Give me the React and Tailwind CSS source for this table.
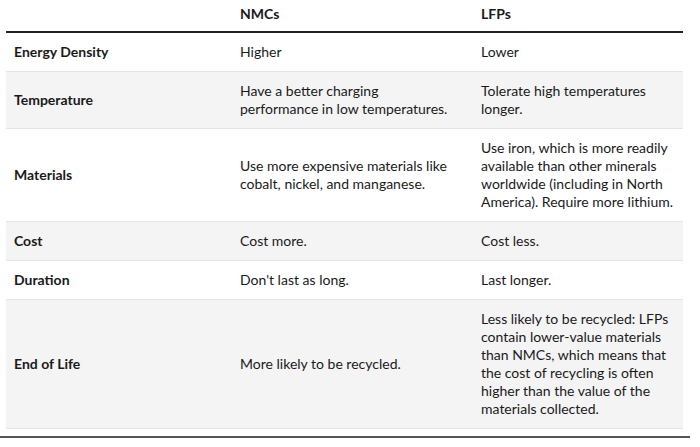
import React from 'react';

const rows = [
    { label: 'Energy Density', nmc: 'Higher', lfp: 'Lower' },
    {
        label: 'Temperature',
        nmc: 'Have a better charging performance in low temperatures.',
        lfp: 'Tolerate high temperatures longer.',
    },
    {
        label: 'Materials',
        nmc: 'Use more expensive materials like cobalt, nickel, and manganese.',
        lfp: 'Use iron, which is more readily available than other minerals worldwide (including in North America). Require more lithium.',
    },
    { label: 'Cost', nmc: 'Cost more.', lfp: 'Cost less.' },
    { label: 'Duration', nmc: "Don't last as long.", lfp: 'Last longer.' },
    {
        label: 'End of Life',
        nmc: 'More likely to be recycled.',
        lfp: 'Less likely to be recycled: LFPs contain lower-value materials than NMCs, which means that the cost of recycling is often higher than the value of the materials collected.',
    },
];

const App = () => {
    return (
        <div className="w-[700px] h-[447px] bg-white pt-[5px] text-[#1a1a1a] text-[14px] leading-[18px] font-['Lato',sans-serif] overflow-hidden">
            <table className="ml-[6px] w-[677px] table-fixed border-collapse">
                <colgroup>
                    <col className="w-[226px]" />
                    <col className="w-[241px]" />
                    <col className="w-[210px]" />
                </colgroup>
                <thead>
                    <tr className="border-b-2 border-[#222]">
                        <th></th>
                        <th className="text-left font-bold px-2 pt-0 pb-[8px]">NMCs</th>
                        <th className="text-left font-bold px-2 pt-0 pb-[8px]">LFPs</th>
                    </tr>
                </thead>
                <tbody>
                    {rows.map((row, i) => (
                        <tr
                            key={row.label}
                            className={`border-b border-[#e4e4e4] ${i % 2 === 1 ? 'bg-[#f4f4f4]' : 'bg-white'}`}
                        >
                            <td className="font-bold px-2 py-[10px] align-middle">{row.label}</td>
                            <td className="pl-2 pr-5 py-[10px] align-middle">{row.nmc}</td>
                            <td className="px-2 py-[10px] align-middle">{row.lfp}</td>
                        </tr>
                    ))}
                </tbody>
            </table>
            <div className="w-[690px] h-[2px] bg-[#555] mt-[7px]" />
        </div>
    );
};

export default App;
